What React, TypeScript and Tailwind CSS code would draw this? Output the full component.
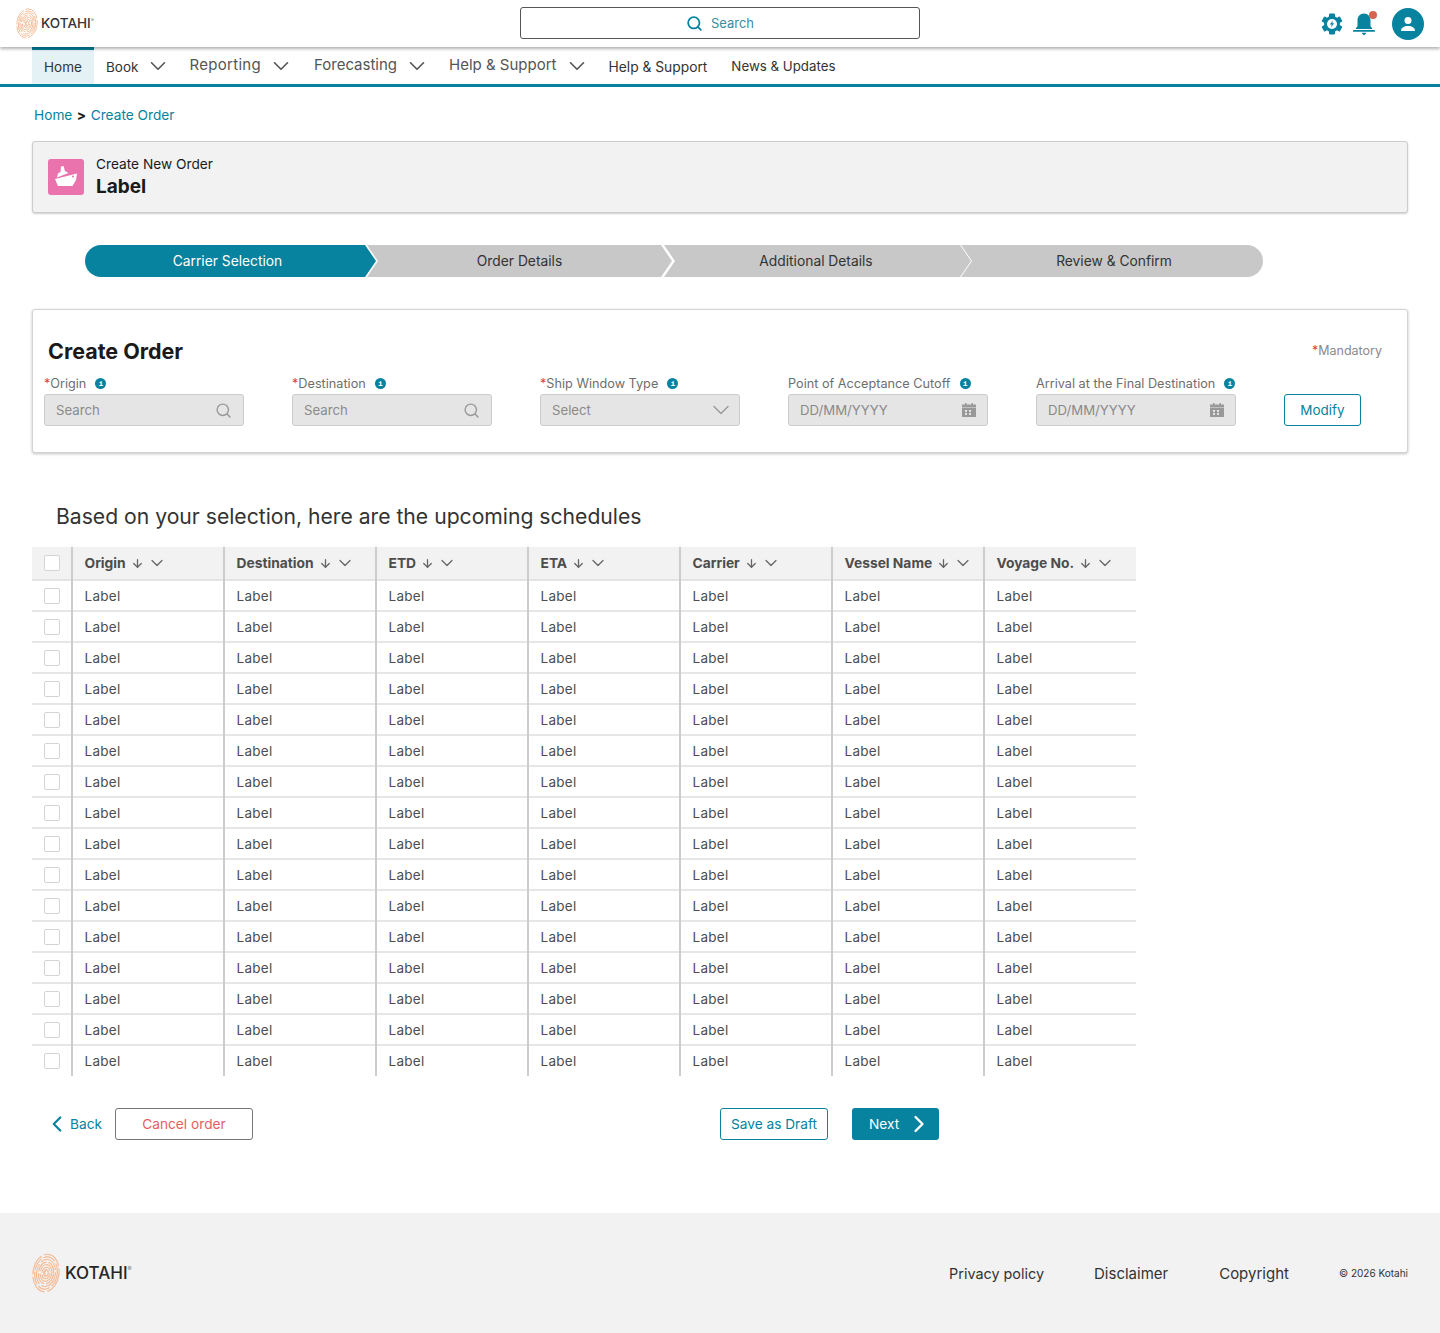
import { ChevronDown, ChevronLeft, ChevronRight, ArrowDown, Search } from 'lucide-react'

const teal = '#07829f'

function Fingerprint({ className }: { className: string }) {
    const rings = [13, 11.200, 9.400, 7.600, 5.800, 4, 2.200]
    return (
        <svg viewBox="0 0 28 40" className={className} fill="none" stroke="#f4bd98">
            <g transform="rotate(8 14 20)">
                {rings.map((rx, i) => (
                    <ellipse key={i} cx="14" cy="20" rx={rx} ry={rx * 1.45} strokeWidth="1.200" strokeDasharray={i % 2 ? '13 2' : '21 2.500'} />
                ))}
                <path d="M14 16c-1.500 2-1.500 6 0 8" strokeWidth="1.200" />
            </g>
        </svg>
    )
}

function Gear() {
    return (
        <svg viewBox="0 0 22 22" className="w-[22px] h-[22px]">
            {[0, 60, 120, 180, 240, 300].map(a => (
                <rect key={a} x="8" y="0.5" width="6" height="5" rx="1" fill={teal} transform={`rotate(${a} 11 11)`} />
            ))}
            <circle cx="11" cy="11" r="8" fill={teal} />
            <circle cx="11" cy="11" r="5" fill="#fff" />
            <path d="M12 7.5 8.8 11.6h2l-1 3 3.4-4.3h-2z" fill={teal} />
        </svg>
    )
}

function Bell() {
    return (
        <span className="relative w-[24px] h-[24px] block">
            <svg viewBox="0 0 24 24" className="w-[24px] h-[24px]">
                <path d="M12 1.5c-4 0-6.5 3-6.5 7v5.5L3.5 17h17l-2-3V8.500c0-4-2.500-7-6.500-7z" fill={teal} />
                <rect x="1" y="18" width="22" height="1.800" rx=".9" fill={teal} />
                <path d="M9.500 20.800h5L12 23.500z" fill={teal} />
            </svg>
            <span className="absolute top-[-1px] right-[-1px] w-[8px] h-[8px] rounded-full bg-[#d4654f]"></span>
        </span>
    )
}

function Avatar() {
    return (
        <span className="w-[32px] h-[32px] rounded-full bg-[#07829f] flex items-center justify-center">
            <svg viewBox="0 0 16 16" className="w-[16px] h-[16px]" fill="#fff">
                <circle cx="8" cy="4.500" r="3.500" />
                <path d="M1 15c0-3.500 3-5 7-5s7 1.500 7 5z" />
            </svg>
        </span>
    )
}

function Ship() {
    return (
        <svg viewBox="0 0 36 36" className="w-[36px] h-[36px]">
            <rect width="36" height="36" rx="3" fill="#ea73ad" />
            <path d="M9 18.500l1-4 2.500-1.500.5-5.500 2.500-.5 1.500 5 3.500 2z" fill="#fff" />
            <path d="M7 20 29 14.500l-1 6.500-3.500 6H10z" fill="#fff" />
            <circle cx="25" cy="17.500" r="1" fill="#ea73ad" />
        </svg>
    )
}

function Info() {
    return (
        <span className="w-[11px] h-[11px] rounded-full bg-[#07829f] text-white text-[8px] font-bold leading-[11px] text-center font-['Liberation_Mono',monospace]">i</span>
    )
}

function Calendar() {
    return (
        <svg viewBox="0 0 14 14" className="w-[14px] h-[14px]" fill="#999999">
            <rect x="3" y="0" width="1.500" height="3" />
            <rect x="9.500" y="0" width="1.500" height="3" />
            <rect x="0" y="1.500" width="14" height="3" />
            <path fillRule="evenodd" d="M0 5h14v9H0zM3 7h2v2H3zm4 0h2v2H7zm-4 3h2v2H3zm4 0h2v2H7z" />
        </svg>
    )
}

function Field({ label, req, placeholder, icon }: { label: string, req?: boolean, placeholder: string, icon: React.ReactNode }) {
    return (
        <div className="w-[200px] shrink-0">
            <div className="h-[18px] flex items-center gap-[9px] text-[12.700px] text-[#6e6e6e] whitespace-nowrap">
                <span className="mt-[2px]">{req && <span className="text-[#e03c3c]">*</span>}{label}</span>
                <Info />
            </div>
            <div className="mt-[2px] h-[32px] px-[11px] flex items-center justify-between bg-[#e5e5e5] border border-[#cccccc] rounded-[3px] text-[13.200px] text-[#8a8a8a]">
                <span className="mt-[2px]">{placeholder}</span>
                {icon}
            </div>
        </div>
    )
}

function Stepper() {
    return (
        <div className="mt-[32px] ml-[85px] flex h-[32px] text-[13.800px] text-[#333333]">
            <div className="w-[291px] pt-[1px] rounded-l-full bg-[#07829f] text-white flex items-center justify-center pr-[6px] [clip-path:polygon(0_0,calc(100%-11px)_0,100%_50%,calc(100%-11px)_100%,0_100%)]">Carrier Selection</div>
            <div className="w-[305px] pt-[1px] -ml-[9px] bg-[#c8c8c8] flex items-center justify-center [clip-path:polygon(0_0,calc(100%-11px)_0,100%_50%,calc(100%-11px)_100%,0_100%,11px_50%)]">Order Details</div>
            <div className="w-[307px] pt-[1px] pr-[3px] -ml-[8px] bg-[#c8c8c8] flex items-center justify-center [clip-path:polygon(0_0,calc(100%-11px)_0,100%_50%,calc(100%-11px)_100%,0_100%,11px_50%)]">Additional Details</div>
            <div className="w-[302px] pt-[1px] -ml-[10px] rounded-r-full bg-[#c8c8c8] flex items-center justify-center pl-[4px] [clip-path:polygon(0_0,100%_0,100%_100%,0_100%,11px_50%)]">Review &amp; Confirm</div>
        </div>
    )
}

const columns = ['Origin', 'Destination', 'ETD', 'ETA', 'Carrier', 'Vessel Name', 'Voyage No.']
const rows = Array.from({ length: 16 }, (_, i) => i)

function Checkbox() {
    return <span className="block w-[16px] h-[16px] bg-white border border-[#d4d4d4] rounded-[2px]"></span>
}

function ScheduleTable() {
    return (
        <table className="mt-[16px] ml-[32px] w-[1104px] table-fixed border-collapse text-[13.500px] tracking-[0.02em]">
            <thead>
                <tr className="h-[33px] bg-[#f2f2f2] border-b-2 border-[#e3e3e3]">
                    <th className="w-[40px] pl-[12px] border-r-2 border-[#cccccc]"><Checkbox /></th>
                    {columns.map((c, i) => (
                        <th key={c} className={`w-[152px] pl-[11.500px] text-left text-[13.800px] tracking-normal font-bold text-[#4d4d4d] ${i < 6 ? 'border-r-2 border-[#cccccc]' : ''}`}>
                            <span className="flex items-center">
                                {c}
                                <ArrowDown className="w-[13px] h-[13px] ml-[5px] text-[#666666]" strokeWidth={2.400} />
                                <ChevronDown className="w-[20px] h-[20px] ml-[3px] text-[#666666]" strokeWidth={1.500} />
                            </span>
                        </th>
                    ))}
                </tr>
            </thead>
            <tbody>
                {rows.map(r => (
                    <tr key={r} className={`h-[31px] ${r < 15 ? 'border-b-2 border-[#e6e6e6]' : ''}`}>
                        <td className="pl-[12px] border-r-2 border-[#cccccc]"><Checkbox /></td>
                        {columns.map((c, i) => (
                            <td key={c} className={`pl-[11.500px] text-[#4d4d4d] ${r < 15 ? 'pt-[2px]' : ''} ${i < 6 ? 'border-r-2 border-[#cccccc]' : ''}`}>Label</td>
                        ))}
                    </tr>
                ))}
            </tbody>
        </table>
    )
}

function NavChevron() {
    return <ChevronDown className="ml-[7px] w-[26px] h-[26px] text-[#555555]" strokeWidth={1.500} />
}

export default function App() {
    return (
        <div className="w-[1440px] h-[1333px] flex flex-col bg-white font-['Inter',sans-serif] text-[#1a1a1a] overflow-hidden">
            <header className="relative z-10 h-[47px] shrink-0 grid grid-cols-[1fr_400px_1fr] items-center bg-white shadow-[0_2px_3px_rgba(0,0,0,0.3)]">
                <div className="flex items-center pl-[16px]">
                    <Fingerprint className="w-[22px] h-[31px]" />
                    <span className="ml-[3px] text-[13.500px] font-medium text-[#333333]">KOTAHI</span>
                    <span className="text-[5px] text-[#777777] -mt-[6px]">®</span>
                </div>
                <div className="h-[32px] mb-[1px] flex items-center justify-center gap-[8px] border border-[#555555] rounded-[3px] text-[13px] text-[#07829f]">
                    <Search className="w-[17px] h-[17px]" strokeWidth={2.500} />
                    <span className="mt-[2px] text-[#3b8ba0]">Search</span>
                </div>
                <div className="flex items-center justify-end pr-[16px]">
                    <Gear />
                    <span className="ml-[9px]"><Bell /></span>
                    <span className="ml-[16px]"><Avatar /></span>
                </div>
            </header>

            <nav className="h-[40px] shrink-0 flex items-stretch pl-[32px] border-b-[3px] border-[#07829f] text-[#333333]">
                <div className="w-[62px] bg-[#e4f1f5] border-t-[3px] border-[#07829f] flex items-center justify-center text-[13.500px]">Home</div>
                <div className="ml-[12px] flex items-center text-[13.500px]"><span className="mt-[3px]">Book</span><NavChevron /></div>
                <div className="ml-[18px] flex items-center text-[15px] text-[#555555]"><span className="tracking-[0.3px]">Reporting</span><NavChevron /></div>
                <div className="ml-[20px] flex items-center text-[15px] text-[#555555]">Forecasting<NavChevron /></div>
                <div className="ml-[19px] flex items-center text-[15px] text-[#555555]">Help &amp; Support<NavChevron /></div>
                <div className="ml-[19px] mt-[3px] flex items-center text-[13.800px]">Help &amp; Support</div>
                <div className="ml-[24px] mt-[3px] flex items-center text-[13.300px]">News &amp; Updates</div>
            </nav>

            <div className="mt-[19px] h-[18px] pl-[34px] flex items-center gap-[4.500px] text-[13.700px] text-[#07829f]">
                <span>Home</span>
                <span className="text-[#1a1a1a] font-bold">&gt;</span>
                <span>Create Order</span>
            </div>

            <section className="mt-[17px] mx-[32px] h-[72px] flex items-center pl-[15px] bg-[#f2f2f2] border border-[#cccccc] rounded-[3px] shadow-[0_1px_2px_rgba(0,0,0,0.2)]">
                <Ship />
                <div className="ml-[12px] mb-[2px]">
                    <div className="text-[13.700px] leading-[20px]">Create New Order</div>
                    <div className="mt-[1px] text-[19px] leading-[24px] font-bold">Label</div>
                </div>
            </section>

            <Stepper />

            <section className="mt-[32px] mx-[32px] h-[144px] pl-[11px] bg-white border border-[#d4d4d4] rounded-[3px] shadow-[0_1px_3px_rgba(0,0,0,0.25)]">
                <div className="h-[64px] pt-[27px] flex justify-between items-start">
                    <h1 className="ml-[4px] text-[21.500px] leading-[28px] font-bold">Create Order</h1>
                    <span className="mr-[25px] mt-[5px] text-[12.500px] text-[#8a8a8a]"><span className="text-[#e03c3c]">*</span>Mandatory</span>
                </div>
                <div className="flex gap-[48px]">
                    <Field req label="Origin" placeholder="Search" icon={<Search className="w-[17px] h-[17px] text-[#999999]" />} />
                    <Field req label="Destination" placeholder="Search" icon={<Search className="w-[17px] h-[17px] text-[#999999]" />} />
                    <Field req label="Ship Window Type" placeholder="Select" icon={<ChevronDown className="w-[28px] h-[28px] -mr-[7px] text-[#999999]" strokeWidth={1.200} />} />
                    <Field label="Point of Acceptance Cutoff" placeholder="DD/MM/YYYY" icon={<Calendar />} />
                    <Field label="Arrival at the Final Destination" placeholder="DD/MM/YYYY" icon={<Calendar />} />
                    <div className="self-end h-[32px] w-[77px] shrink-0 flex items-center justify-center border border-[#07829f] rounded-[3px] text-[13.500px] text-[#07829f]">Modify</div>
                </div>
            </section>

            <h2 className="mt-[50px] ml-[56px] text-[21.150px] leading-[28px] text-[#333333]">Based on your selection, here are the upcoming schedules</h2>

            <ScheduleTable />

            <div className="mt-[32px] h-[32px] flex items-center text-[13.700px]">
                <ChevronLeft className="ml-[44px] w-[26px] h-[26px] text-[#07829f]" strokeWidth={2} />
                <span className="text-[#07829f]">Back</span>
                <div className="ml-[13px] w-[138px] h-[32px] flex items-center justify-center border border-[#777777] rounded-[3px] text-[#e35f5f]">Cancel order</div>
                <div className="ml-[467px] w-[108px] h-[32px] flex items-center justify-center border border-[#07829f] rounded-[3px] text-[#07829f]">Save as Draft</div>
                <div className="ml-[24px] w-[87px] h-[32px] pl-[17px] flex items-center bg-[#07829f] rounded-[3px] text-white">
                    Next
                    <ChevronRight className="ml-[6px] w-[28px] h-[28px]" strokeWidth={2} />
                </div>
            </div>

            <footer className="mt-auto h-[120px] shrink-0 flex items-center pl-[32px] pr-[32px] bg-[#f2f2f2]">
                <Fingerprint className="w-[28px] h-[40px]" />
                <span className="ml-[5px] mt-[2px] text-[17px] font-medium text-[#262626]">KOTAHI</span>
                <span className="text-[6px] text-[#777777] -mt-[10px]">®</span>
                <span className="ml-auto mt-[2px] text-[14.400px] text-[#333333]">Privacy policy</span>
                <span className="ml-[50px] mt-[2px] text-[15px] text-[#333333]">Disclaimer</span>
                <span className="ml-[51px] mt-[2px] text-[15px] text-[#333333]">Copyright</span>
                <span className="ml-[50px] text-[10px] text-[#333333]">© 2026 Kotahi</span>
            </footer>
        </div>
    )
}
